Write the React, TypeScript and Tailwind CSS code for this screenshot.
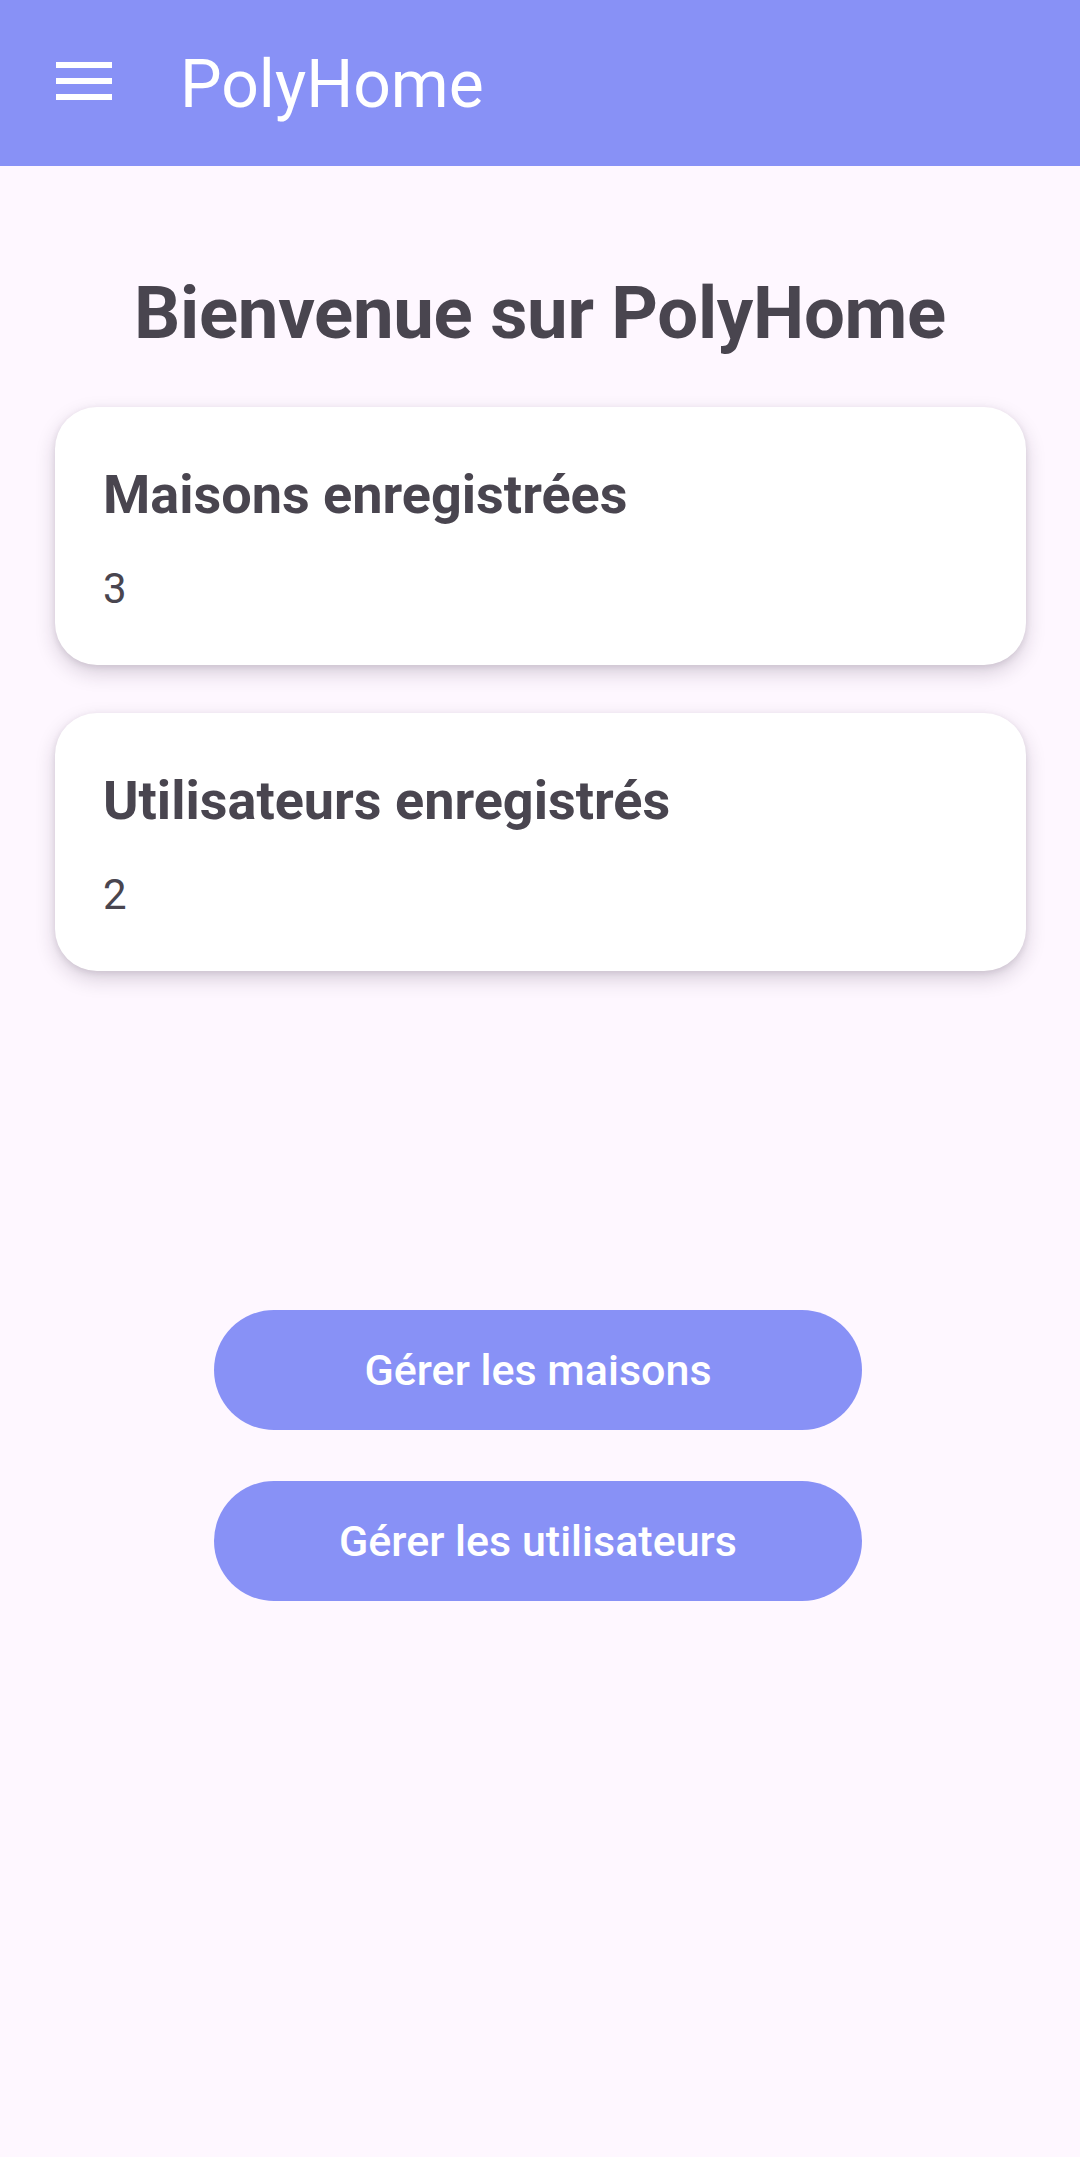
import React from 'react';

interface StatCardProps {
    label: string;
    value: number;
}

// Carte de statistique (titre + nombre)
function StatCard({ label, value }: StatCardProps) {
    return (
        <div className="ml-[55px] mr-[54px] bg-white rounded-[42px] px-[48px] pt-[61px] pb-[55px] shadow-[0_8px_20px_rgba(40,20,50,0.18),0_2px_6px_rgba(40,20,50,0.1)]">
            <h2 className="text-[54px] leading-[53px] font-bold text-[#49454F]">{label}</h2>
            <p className="mt-[47px] text-[42px] leading-[42px] text-[#49454F]">{value}</p>
        </div>
    );
}

function MenuIcon() {
    return (
        <svg width="56" height="38" viewBox="0 0 56 38" className="mb-[4px] shrink-0" fill="white">
            <rect x="0" y="0" width="56" height="6" />
            <rect x="0" y="16" width="56" height="6" />
            <rect x="0" y="32" width="56" height="6" />
        </svg>
    );
}

export default function App() {
    const houses = 3;
    const users = 2;

    return (
        <div className="min-h-screen bg-[#FEF7FF] font-['Roboto',sans-serif]">
            {/* Barre du haut */}
            <header className="h-[166px] bg-[#8891F6] flex items-center pl-[56px]">
                <MenuIcon />
                <span className="ml-[68px] mt-[4px] text-[66px] leading-[66px] text-white">PolyHome</span>
            </header>

            <h1 className="mt-[111px] text-center text-[72.5px] leading-[73px] font-bold text-[#49454F] tracking-[-0.3px]">
                Bienvenue sur PolyHome
            </h1>

            <div className="mt-[57px] flex flex-col gap-[48px]">
                <StatCard label="Maisons enregistrées" value={houses} />
                <StatCard label="Utilisateurs enregistrés" value={users} />
            </div>

            {/* Actions */}
            <div className="mt-[339px] flex flex-col gap-[51px]">
                <button className="ml-[214px] w-[648px] h-[120px] rounded-full bg-[#8891F6] text-white text-[43px] font-medium">
                    Gérer les maisons
                </button>
                <button className="ml-[214px] w-[648px] h-[120px] rounded-full bg-[#8891F6] text-white text-[43px] font-medium">
                    Gérer les utilisateurs
                </button>
            </div>
        </div>
    );
}
